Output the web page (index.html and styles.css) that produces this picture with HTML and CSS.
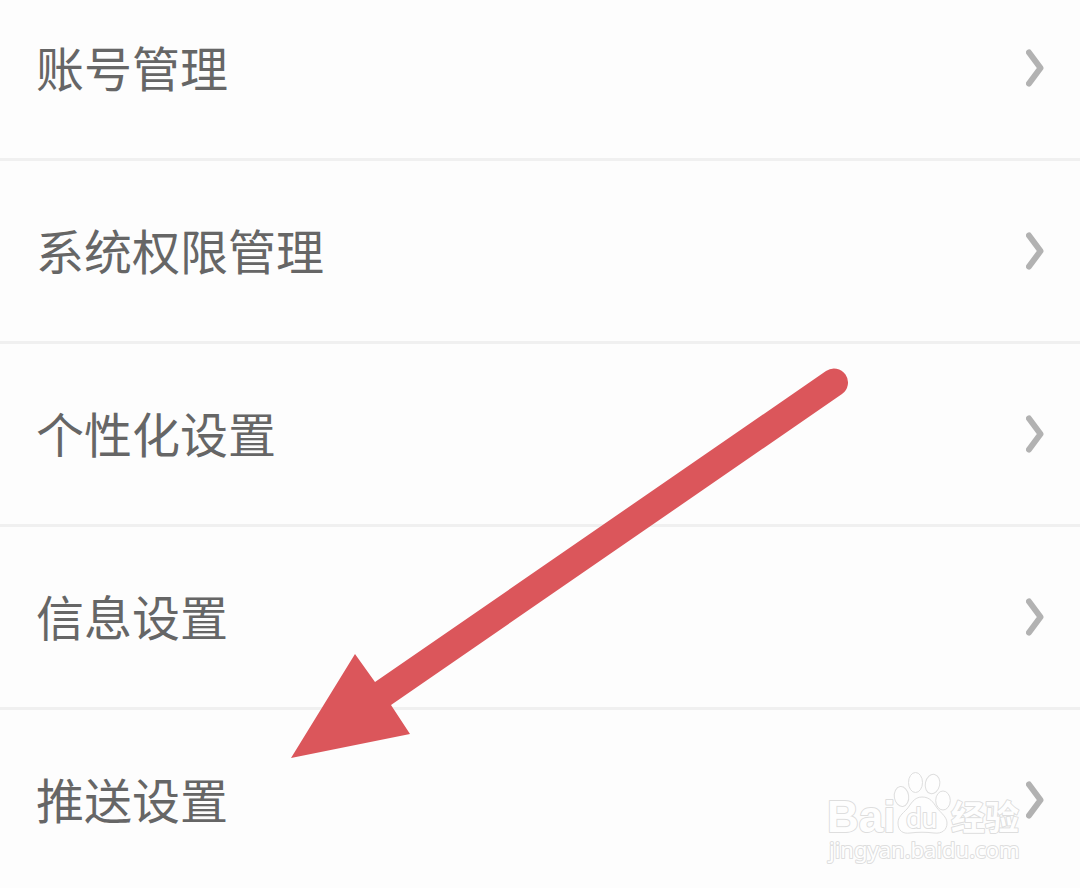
FILE: index.html
```html
<!DOCTYPE html>
<html lang="zh-CN">
<head>
<meta charset="utf-8">
<meta name="viewport" content="width=device-width, initial-scale=1">
<title>设置</title>
<link rel="stylesheet" href="styles.css">
</head>
<body>
<main class="screen">
  <nav class="menu">
    <a class="row" href="#account"><span class="label">账号管理</span><svg class="chevron" viewBox="0 0 18 38" aria-hidden="true"><path d="M3 3.500L14.500 19L3 34.500"/></svg></a>
    <a class="row" href="#permission"><span class="label">系统权限管理</span><svg class="chevron" viewBox="0 0 18 38" aria-hidden="true"><path d="M3 3.500L14.500 19L3 34.500"/></svg></a>
    <a class="row" href="#personal"><span class="label">个性化设置</span><svg class="chevron" viewBox="0 0 18 38" aria-hidden="true"><path d="M3 3.500L14.500 19L3 34.500"/></svg></a>
    <a class="row" href="#message"><span class="label">信息设置</span><svg class="chevron" viewBox="0 0 18 38" aria-hidden="true"><path d="M3 3.500L14.500 19L3 34.500"/></svg></a>
    <a class="row" href="#push"><span class="label">推送设置</span><svg class="chevron" viewBox="0 0 18 38" aria-hidden="true"><path d="M3 3.500L14.500 19L3 34.500"/></svg></a>
  </nav>
  <svg class="arrow" viewBox="0 0 560 394" aria-hidden="true">
    <path d="M0 391L64 287L84 315L535 4A14 14 0 0 1 551 27L100 338L119 367Z"/>
  </svg>
  <svg class="watermark" viewBox="0 0 204 120" role="img" aria-label="Baidu 经验">
    <g class="mark">
      <text class="brand" x="7" y="72">Bai</text>
      <text class="cjk" x="131" y="70">经验</text>
      <text class="site" x="9" y="98">jingyan.baidu.com</text>
    </g>
    <g class="paw">
      <ellipse cx="81.500" cy="36.500" rx="7.200" ry="10" transform="rotate(-8 81.500 36.500)"/>
      <ellipse cx="95.500" cy="22.500" rx="7" ry="10"/>
      <ellipse cx="112.500" cy="24" rx="7.200" ry="9.800" transform="rotate(12 112.500 24)"/>
      <ellipse cx="123" cy="40.500" rx="7.300" ry="9.500"/>
      <path d="M102 37C94 37 91 44 87 49C82 54 78 57 78 63C78 71 83 74 90 73C98 72 106 72 114 73C122 74 127 70 127 63C127 57 121 53 117 48C113 42 110 37 102 37Z"/>
    </g>
    <g class="mark">
      <text class="du" x="86" y="68">du</text>
    </g>
  </svg>
</main>
</body>
</html>
```
FILE: styles.css
```css
* {
  box-sizing: border-box;
}

body {
  margin: 0;
  background: #fdfdfd;
  font-family: "Noto Sans CJK SC", sans-serif;
}

.screen {
  position: relative;
  overflow: hidden;
}

.row {
  display: flex;
  align-items: center;
  justify-content: space-between;
  padding: 60px 36px;
  border-bottom: 3px solid #f0f0f0;
  color: #666;
  font-size: 48px;
  line-height: 56px;
  text-decoration: none;
}

.label {
  padding-bottom: 4px;
}

.row:first-child {
  padding-top: 38px;
}

.row:last-child {
  padding-bottom: 58px;
  border-bottom: 0;
}

.chevron {
  width: 18px;
  height: 38px;
  fill: none;
  stroke: #b2b2b2;
  stroke-width: 6;
  stroke-linecap: round;
  stroke-linejoin: round;
}

.arrow {
  position: absolute;
  top: 367px;
  left: 291px;
  width: 560px;
  height: 394px;
  fill: #db565b;
  pointer-events: none;
}

.watermark {
  position: absolute;
  right: 56px;
  bottom: 8px;
  width: 204px;
  height: 120px;
  overflow: visible;
  pointer-events: none;
}

.paw,
.mark {
  fill: #fefefe;
  stroke: #dedede;
  stroke-width: 1;
}

.mark {
  stroke-width: 2;
  stroke-linejoin: round;
  paint-order: stroke;
}

.brand {
  font-family: "Liberation Sans", sans-serif;
  font-size: 44px;
  font-weight: 700;
}

.du {
  font-family: Roboto, sans-serif;
  font-size: 28px;
}

.cjk {
  font-family: "Noto Sans CJK SC", sans-serif;
  font-size: 34px;
  font-weight: 700;
}

.site {
  font-family: "Noto Sans", sans-serif;
  font-size: 22px;
}
```
